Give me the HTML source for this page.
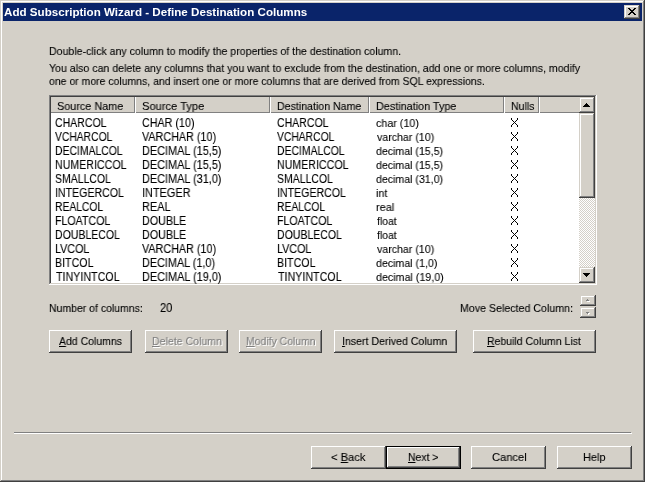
<!DOCTYPE html>
<html><head><meta charset="utf-8"><style>
html,body{margin:0;padding:0;width:645px;height:482px;overflow:hidden;background:#D4D0C8;}
.a{position:absolute;box-sizing:border-box;display:block}
.t{position:absolute;white-space:pre;font-family:'Liberation Sans', sans-serif;font-size:12px;line-height:14px;color:#000;transform-origin:0 0;will-change:transform;-webkit-text-stroke:0.1px currentColor}
u{text-decoration:underline;text-underline-offset:1px}
</style></head><body>
<div class="a" style="left:0px;top:0px;width:645px;height:482px;background:#D4D0C8;box-shadow:inset -1px -1px 0 #404040,inset 1px 1px 0 #D4D0C8,inset -2px -2px 0 #808080,inset 2px 2px 0 #FFFFFF;"></div>
<div class="a" style="left:3px;top:3px;width:639px;height:18px;background:#0A246A;"></div>
<div class="a" style="left:624px;top:5px;width:16px;height:14px;background:#D4D0C8;box-shadow:inset -1px -1px 0 #404040,inset 1px 1px 0 #D4D0C8,inset -2px -2px 0 #808080,inset 2px 2px 0 #FFFFFF;"></div>
<svg class="a" style="left:628px;top:8px" width="8" height="7" shape-rendering="crispEdges"><path fill="#000" d="M0 0h1v1h-1zM1 0h1v1h-1zM6 0h1v1h-1zM7 0h1v1h-1zM1 1h1v1h-1zM2 1h1v1h-1zM5 1h1v1h-1zM6 1h1v1h-1zM2 2h1v1h-1zM3 2h1v1h-1zM4 2h1v1h-1zM5 2h1v1h-1zM3 3h1v1h-1zM4 3h1v1h-1zM2 4h1v1h-1zM3 4h1v1h-1zM4 4h1v1h-1zM5 4h1v1h-1zM1 5h1v1h-1zM2 5h1v1h-1zM5 5h1v1h-1zM6 5h1v1h-1zM0 6h1v1h-1zM1 6h1v1h-1zM6 6h1v1h-1zM7 6h1v1h-1z"/></svg>
<div class="a" style="left:49px;top:95px;width:548px;height:190px;background:#FFFFFF;box-shadow:inset -1px -1px 0 #FFFFFF,inset 1px 1px 0 #808080,inset -2px -2px 0 #D4D0C8,inset 2px 2px 0 #404040;"></div>
<div class="a" style="left:51px;top:97px;width:528px;height:16px;background:#D4D0C8;box-shadow:inset 0 -1px 0 #808080;"></div>
<div class="a" style="left:134px;top:97px;width:1px;height:16px;background:#808080;"></div>
<div class="a" style="left:135px;top:97px;width:1px;height:16px;background:#FFFFFF;"></div>
<div class="a" style="left:269px;top:97px;width:1px;height:16px;background:#808080;"></div>
<div class="a" style="left:270px;top:97px;width:1px;height:16px;background:#FFFFFF;"></div>
<div class="a" style="left:368px;top:97px;width:1px;height:16px;background:#808080;"></div>
<div class="a" style="left:369px;top:97px;width:1px;height:16px;background:#FFFFFF;"></div>
<div class="a" style="left:503px;top:97px;width:1px;height:16px;background:#808080;"></div>
<div class="a" style="left:504px;top:97px;width:1px;height:16px;background:#FFFFFF;"></div>
<div class="a" style="left:538px;top:97px;width:1px;height:16px;background:#808080;"></div>
<div class="a" style="left:539px;top:97px;width:1px;height:16px;background:#FFFFFF;"></div>
<div class="a" style="left:579px;top:97px;width:16px;height:16px;background:#D4D0C8;box-shadow:inset -1px -1px 0 #404040,inset 1px 1px 0 #D4D0C8,inset -2px -2px 0 #808080,inset 2px 2px 0 #FFFFFF;"></div>
<div class="a" style="left:579px;top:267px;width:16px;height:16px;background:#D4D0C8;box-shadow:inset -1px -1px 0 #404040,inset 1px 1px 0 #D4D0C8,inset -2px -2px 0 #808080,inset 2px 2px 0 #FFFFFF;"></div>
<div class="a" style="left:579px;top:113px;width:16px;height:85px;background:#D4D0C8;box-shadow:inset -1px -1px 0 #404040,inset 1px 1px 0 #D4D0C8,inset -2px -2px 0 #808080,inset 2px 2px 0 #FFFFFF;"></div>
<svg class="a" style="left:579px;top:198px" width="16" height="69"><defs><pattern id="ck" width="2" height="2" patternUnits="userSpaceOnUse"><rect width="2" height="2" fill="#D4D0C8"/><rect width="1" height="1" fill="#fff"/><rect x="1" y="1" width="1" height="1" fill="#fff"/></pattern></defs><rect width="16" height="69" fill="url(#ck)"/></svg>
<svg class="a" style="left:583px;top:103px" width="7" height="4" shape-rendering="crispEdges"><path fill="#000" d="M3 0h1v1h-1zM2 1h3v1h-3zM1 2h5v1h-5zM0 3h7v1h-7z"/></svg>
<svg class="a" style="left:583px;top:273px" width="7" height="4" shape-rendering="crispEdges"><path fill="#000" d="M0 0h7v1h-7zM1 1h5v1h-5zM2 2h3v1h-3zM3 3h1v1h-1z"/></svg>
<div class="a" style="left:580px;top:295px;width:16px;height:11px;background:#D4D0C8;box-shadow:inset -1px -1px 0 #404040,inset 1px 1px 0 #D4D0C8,inset -2px -2px 0 #808080,inset 2px 2px 0 #FFFFFF;"></div>
<div class="a" style="left:580px;top:307px;width:16px;height:11px;background:#D4D0C8;box-shadow:inset -1px -1px 0 #404040,inset 1px 1px 0 #D4D0C8,inset -2px -2px 0 #808080,inset 2px 2px 0 #FFFFFF;"></div>
<svg class="a" style="left:586px;top:299px" width="4" height="3" shape-rendering="crispEdges"><path fill="#FFFFFF" d="M1 2h3v1h-3zM2 1h1v1h-1z"/><path fill="#808080" d="M1 0h1v1h-1zM0 1h3v1h-3z"/></svg>
<svg class="a" style="left:586px;top:312px" width="4" height="3" shape-rendering="crispEdges"><path fill="#FFFFFF" d="M1 1h3v1h-3zM2 2h1v1h-1z"/><path fill="#808080" d="M0 0h3v1h-3zM1 1h1v1h-1z"/></svg>
<div class="a" style="left:49px;top:330px;width:83px;height:23px;background:#D4D0C8;box-shadow:inset -1px -1px 0 #404040,inset 1px 1px 0 #FFFFFF,inset -2px -2px 0 #808080;"></div>
<div class="a" style="left:145px;top:330px;width:83px;height:23px;background:#D4D0C8;box-shadow:inset -1px -1px 0 #404040,inset 1px 1px 0 #FFFFFF,inset -2px -2px 0 #808080;"></div>
<div class="a" style="left:239px;top:330px;width:83px;height:23px;background:#D4D0C8;box-shadow:inset -1px -1px 0 #404040,inset 1px 1px 0 #FFFFFF,inset -2px -2px 0 #808080;"></div>
<div class="a" style="left:334px;top:330px;width:123px;height:23px;background:#D4D0C8;box-shadow:inset -1px -1px 0 #404040,inset 1px 1px 0 #FFFFFF,inset -2px -2px 0 #808080;"></div>
<div class="a" style="left:473px;top:330px;width:123px;height:23px;background:#D4D0C8;box-shadow:inset -1px -1px 0 #404040,inset 1px 1px 0 #FFFFFF,inset -2px -2px 0 #808080;"></div>
<div class="a" style="left:14px;top:432px;width:617px;height:1px;background:#808080;"></div>
<div class="a" style="left:14px;top:433px;width:618px;height:1px;background:#FFFFFF;"></div>
<div class="a" style="left:311px;top:446px;width:75px;height:23px;background:#D4D0C8;box-shadow:inset -1px -1px 0 #404040,inset 1px 1px 0 #FFFFFF,inset -2px -2px 0 #808080;"></div>
<div class="a" style="left:386px;top:446px;width:75px;height:23px;background:#D4D0C8;box-shadow:inset -1px -1px 0 #000,inset 1px 1px 0 #000,inset -2px -2px 0 #404040,inset 2px 2px 0 #FFFFFF,inset -3px -3px 0 #808080;"></div>
<div class="a" style="left:471px;top:446px;width:75px;height:23px;background:#D4D0C8;box-shadow:inset -1px -1px 0 #404040,inset 1px 1px 0 #FFFFFF,inset -2px -2px 0 #808080;"></div>
<div class="a" style="left:557px;top:446px;width:75px;height:23px;background:#D4D0C8;box-shadow:inset -1px -1px 0 #404040,inset 1px 1px 0 #FFFFFF,inset -2px -2px 0 #808080;"></div>
<svg class="a" style="left:511px;top:118px" width="7" height="9" shape-rendering="crispEdges"><path fill="#000" d="M0 0h1v1h-1zM6 0h1v1h-1zM0 1h1v1h-1zM6 1h1v1h-1zM1 2h1v1h-1zM5 2h1v1h-1zM2 3h1v1h-1zM4 3h1v1h-1zM3 4h1v1h-1zM2 5h1v1h-1zM4 5h1v1h-1zM1 6h1v1h-1zM5 6h1v1h-1zM0 7h1v1h-1zM6 7h1v1h-1zM0 8h1v1h-1zM6 8h1v1h-1z"/></svg>
<svg class="a" style="left:511px;top:132px" width="7" height="9" shape-rendering="crispEdges"><path fill="#000" d="M0 0h1v1h-1zM6 0h1v1h-1zM0 1h1v1h-1zM6 1h1v1h-1zM1 2h1v1h-1zM5 2h1v1h-1zM2 3h1v1h-1zM4 3h1v1h-1zM3 4h1v1h-1zM2 5h1v1h-1zM4 5h1v1h-1zM1 6h1v1h-1zM5 6h1v1h-1zM0 7h1v1h-1zM6 7h1v1h-1zM0 8h1v1h-1zM6 8h1v1h-1z"/></svg>
<svg class="a" style="left:511px;top:146px" width="7" height="9" shape-rendering="crispEdges"><path fill="#000" d="M0 0h1v1h-1zM6 0h1v1h-1zM0 1h1v1h-1zM6 1h1v1h-1zM1 2h1v1h-1zM5 2h1v1h-1zM2 3h1v1h-1zM4 3h1v1h-1zM3 4h1v1h-1zM2 5h1v1h-1zM4 5h1v1h-1zM1 6h1v1h-1zM5 6h1v1h-1zM0 7h1v1h-1zM6 7h1v1h-1zM0 8h1v1h-1zM6 8h1v1h-1z"/></svg>
<svg class="a" style="left:511px;top:160px" width="7" height="9" shape-rendering="crispEdges"><path fill="#000" d="M0 0h1v1h-1zM6 0h1v1h-1zM0 1h1v1h-1zM6 1h1v1h-1zM1 2h1v1h-1zM5 2h1v1h-1zM2 3h1v1h-1zM4 3h1v1h-1zM3 4h1v1h-1zM2 5h1v1h-1zM4 5h1v1h-1zM1 6h1v1h-1zM5 6h1v1h-1zM0 7h1v1h-1zM6 7h1v1h-1zM0 8h1v1h-1zM6 8h1v1h-1z"/></svg>
<svg class="a" style="left:511px;top:174px" width="7" height="9" shape-rendering="crispEdges"><path fill="#000" d="M0 0h1v1h-1zM6 0h1v1h-1zM0 1h1v1h-1zM6 1h1v1h-1zM1 2h1v1h-1zM5 2h1v1h-1zM2 3h1v1h-1zM4 3h1v1h-1zM3 4h1v1h-1zM2 5h1v1h-1zM4 5h1v1h-1zM1 6h1v1h-1zM5 6h1v1h-1zM0 7h1v1h-1zM6 7h1v1h-1zM0 8h1v1h-1zM6 8h1v1h-1z"/></svg>
<svg class="a" style="left:511px;top:188px" width="7" height="9" shape-rendering="crispEdges"><path fill="#000" d="M0 0h1v1h-1zM6 0h1v1h-1zM0 1h1v1h-1zM6 1h1v1h-1zM1 2h1v1h-1zM5 2h1v1h-1zM2 3h1v1h-1zM4 3h1v1h-1zM3 4h1v1h-1zM2 5h1v1h-1zM4 5h1v1h-1zM1 6h1v1h-1zM5 6h1v1h-1zM0 7h1v1h-1zM6 7h1v1h-1zM0 8h1v1h-1zM6 8h1v1h-1z"/></svg>
<svg class="a" style="left:511px;top:202px" width="7" height="9" shape-rendering="crispEdges"><path fill="#000" d="M0 0h1v1h-1zM6 0h1v1h-1zM0 1h1v1h-1zM6 1h1v1h-1zM1 2h1v1h-1zM5 2h1v1h-1zM2 3h1v1h-1zM4 3h1v1h-1zM3 4h1v1h-1zM2 5h1v1h-1zM4 5h1v1h-1zM1 6h1v1h-1zM5 6h1v1h-1zM0 7h1v1h-1zM6 7h1v1h-1zM0 8h1v1h-1zM6 8h1v1h-1z"/></svg>
<svg class="a" style="left:511px;top:216px" width="7" height="9" shape-rendering="crispEdges"><path fill="#000" d="M0 0h1v1h-1zM6 0h1v1h-1zM0 1h1v1h-1zM6 1h1v1h-1zM1 2h1v1h-1zM5 2h1v1h-1zM2 3h1v1h-1zM4 3h1v1h-1zM3 4h1v1h-1zM2 5h1v1h-1zM4 5h1v1h-1zM1 6h1v1h-1zM5 6h1v1h-1zM0 7h1v1h-1zM6 7h1v1h-1zM0 8h1v1h-1zM6 8h1v1h-1z"/></svg>
<svg class="a" style="left:511px;top:230px" width="7" height="9" shape-rendering="crispEdges"><path fill="#000" d="M0 0h1v1h-1zM6 0h1v1h-1zM0 1h1v1h-1zM6 1h1v1h-1zM1 2h1v1h-1zM5 2h1v1h-1zM2 3h1v1h-1zM4 3h1v1h-1zM3 4h1v1h-1zM2 5h1v1h-1zM4 5h1v1h-1zM1 6h1v1h-1zM5 6h1v1h-1zM0 7h1v1h-1zM6 7h1v1h-1zM0 8h1v1h-1zM6 8h1v1h-1z"/></svg>
<svg class="a" style="left:511px;top:244px" width="7" height="9" shape-rendering="crispEdges"><path fill="#000" d="M0 0h1v1h-1zM6 0h1v1h-1zM0 1h1v1h-1zM6 1h1v1h-1zM1 2h1v1h-1zM5 2h1v1h-1zM2 3h1v1h-1zM4 3h1v1h-1zM3 4h1v1h-1zM2 5h1v1h-1zM4 5h1v1h-1zM1 6h1v1h-1zM5 6h1v1h-1zM0 7h1v1h-1zM6 7h1v1h-1zM0 8h1v1h-1zM6 8h1v1h-1z"/></svg>
<svg class="a" style="left:511px;top:258px" width="7" height="9" shape-rendering="crispEdges"><path fill="#000" d="M0 0h1v1h-1zM6 0h1v1h-1zM0 1h1v1h-1zM6 1h1v1h-1zM1 2h1v1h-1zM5 2h1v1h-1zM2 3h1v1h-1zM4 3h1v1h-1zM3 4h1v1h-1zM2 5h1v1h-1zM4 5h1v1h-1zM1 6h1v1h-1zM5 6h1v1h-1zM0 7h1v1h-1zM6 7h1v1h-1zM0 8h1v1h-1zM6 8h1v1h-1z"/></svg>
<svg class="a" style="left:511px;top:272px" width="7" height="9" shape-rendering="crispEdges"><path fill="#000" d="M0 0h1v1h-1zM6 0h1v1h-1zM0 1h1v1h-1zM6 1h1v1h-1zM1 2h1v1h-1zM5 2h1v1h-1zM2 3h1v1h-1zM4 3h1v1h-1zM3 4h1v1h-1zM2 5h1v1h-1zM4 5h1v1h-1zM1 6h1v1h-1zM5 6h1v1h-1zM0 7h1v1h-1zM6 7h1v1h-1zM0 8h1v1h-1zM6 8h1v1h-1z"/></svg>
<div class="t" style="left:3.94px;top:5px;transform:scaleX(1.0559);font-size:11.5px;font-weight:bold;color:#fff;font-size:11px;-webkit-text-stroke-width:0;">Add Subscription Wizard - Define Destination Columns</div>
<div class="t" style="left:49.08px;top:44px;transform:scaleX(0.9211);font-size:11.5px;">Double-click any column to modify the properties of the destination column.</div>
<div class="t" style="left:49.08px;top:61px;transform:scaleX(0.9217);font-size:11.5px;">You also can delete any columns that you want to exclude from the destination, add one or more columns, modify</div>
<div class="t" style="left:49.09px;top:74px;transform:scaleX(0.9099);font-size:11.5px;">one or more columns, and insert one or more columns that are derived from SQL expressions.</div>
<div class="t" style="left:57.06px;top:99px;transform:scaleX(0.942);font-size:11.5px;">Source Name</div>
<div class="t" style="left:142.03px;top:99px;transform:scaleX(0.9683);font-size:11.5px;">Source Type</div>
<div class="t" style="left:277.08px;top:99px;transform:scaleX(0.9222);font-size:11.5px;">Destination Name</div>
<div class="t" style="left:376.06px;top:99px;transform:scaleX(0.9405);font-size:11.5px;">Destination Type</div>
<div class="t" style="left:511.08px;top:99px;transform:scaleX(0.9167);font-size:11.5px;">Nulls</div>
<div class="t" style="left:55.12px;top:116px;transform:scaleX(0.8772);">CHARCOL</div>
<div class="t" style="left:142.11px;top:116px;transform:scaleX(0.8947);">CHAR (10)</div>
<div class="t" style="left:277.12px;top:116px;transform:scaleX(0.8772);">CHARCOL</div>
<div class="t" style="left:376.07px;top:116px;transform:scaleX(0.9318);font-size:11.5px;">char (10)</div>
<div class="t" style="left:55.0px;top:130px;transform:scaleX(0.8591);">VCHARCOL</div>
<div class="t" style="left:142.0px;top:130px;transform:scaleX(0.8988);">VARCHAR (10)</div>
<div class="t" style="left:277.0px;top:130px;transform:scaleX(0.8591);">VCHARCOL</div>
<div class="t" style="left:377.0px;top:130px;transform:scaleX(0.923);font-size:11.5px;">varchar (10)</div>
<div class="t" style="left:55.13px;top:144px;transform:scaleX(0.8662);">DECIMALCOL</div>
<div class="t" style="left:142.09px;top:144px;transform:scaleX(0.907);">DECIMAL (15,5)</div>
<div class="t" style="left:277.13px;top:144px;transform:scaleX(0.8662);">DECIMALCOL</div>
<div class="t" style="left:376.08px;top:144px;transform:scaleX(0.9197);font-size:11.5px;">decimal (15,5)</div>
<div class="t" style="left:55.11px;top:158px;transform:scaleX(0.8861);">NUMERICCOL</div>
<div class="t" style="left:142.09px;top:158px;transform:scaleX(0.907);">DECIMAL (15,5)</div>
<div class="t" style="left:277.11px;top:158px;transform:scaleX(0.8861);">NUMERICCOL</div>
<div class="t" style="left:376.08px;top:158px;transform:scaleX(0.9197);font-size:11.5px;">decimal (15,5)</div>
<div class="t" style="left:55.13px;top:172px;transform:scaleX(0.873);">SMALLCOL</div>
<div class="t" style="left:142.09px;top:172px;transform:scaleX(0.907);">DECIMAL (31,0)</div>
<div class="t" style="left:277.13px;top:172px;transform:scaleX(0.873);">SMALLCOL</div>
<div class="t" style="left:376.08px;top:172px;transform:scaleX(0.9197);font-size:11.5px;">decimal (31,0)</div>
<div class="t" style="left:55.12px;top:186px;transform:scaleX(0.8831);">INTEGERCOL</div>
<div class="t" style="left:142.09px;top:186px;transform:scaleX(0.9096);">INTEGER</div>
<div class="t" style="left:277.12px;top:186px;transform:scaleX(0.8831);">INTEGERCOL</div>
<div class="t" style="left:376.06px;top:186px;transform:scaleX(0.9364);font-size:11.5px;">int</div>
<div class="t" style="left:55.14px;top:200px;transform:scaleX(0.86);">REALCOL</div>
<div class="t" style="left:142.09px;top:200px;transform:scaleX(0.91);">REAL</div>
<div class="t" style="left:277.14px;top:200px;transform:scaleX(0.86);">REALCOL</div>
<div class="t" style="left:376.04px;top:200px;transform:scaleX(0.9588);font-size:11.5px;">real</div>
<div class="t" style="left:55.11px;top:214px;transform:scaleX(0.8852);">FLOATCOL</div>
<div class="t" style="left:142.1px;top:214px;transform:scaleX(0.8958);">DOUBLE</div>
<div class="t" style="left:277.11px;top:214px;transform:scaleX(0.8852);">FLOATCOL</div>
<div class="t" style="left:377.0px;top:214px;transform:scaleX(0.9048);font-size:11.5px;">float</div>
<div class="t" style="left:55.12px;top:228px;transform:scaleX(0.8767);">DOUBLECOL</div>
<div class="t" style="left:142.1px;top:228px;transform:scaleX(0.8958);">DOUBLE</div>
<div class="t" style="left:277.12px;top:228px;transform:scaleX(0.8767);">DOUBLECOL</div>
<div class="t" style="left:377.0px;top:228px;transform:scaleX(0.9048);font-size:11.5px;">float</div>
<div class="t" style="left:55.11px;top:242px;transform:scaleX(0.8919);">LVCOL</div>
<div class="t" style="left:142.0px;top:242px;transform:scaleX(0.8988);">VARCHAR (10)</div>
<div class="t" style="left:277.11px;top:242px;transform:scaleX(0.8919);">LVCOL</div>
<div class="t" style="left:377.0px;top:242px;transform:scaleX(0.923);font-size:11.5px;">varchar (10)</div>
<div class="t" style="left:55.11px;top:256px;transform:scaleX(0.8881);">BITCOL</div>
<div class="t" style="left:142.1px;top:256px;transform:scaleX(0.9025);">DECIMAL (1,0)</div>
<div class="t" style="left:277.11px;top:256px;transform:scaleX(0.8881);">BITCOL</div>
<div class="t" style="left:376.08px;top:256px;transform:scaleX(0.9231);font-size:11.5px;">decimal (1,0)</div>
<div class="t" style="left:56.0px;top:270px;transform:scaleX(0.8915);">TINYINTCOL</div>
<div class="t" style="left:142.09px;top:270px;transform:scaleX(0.907);">DECIMAL (19,0)</div>
<div class="t" style="left:278.0px;top:270px;transform:scaleX(0.8915);">TINYINTCOL</div>
<div class="t" style="left:376.07px;top:270px;transform:scaleX(0.9296);font-size:11.5px;">decimal (19,0)</div>
<div class="t" style="left:49.09px;top:301px;transform:scaleX(0.9109);font-size:11.5px;">Number of columns:</div>
<div class="t" style="left:160.08px;top:301px;transform:scaleX(0.9167);">20</div>
<div class="t" style="left:460.08px;top:301px;transform:scaleX(0.925);font-size:11.5px;">Move Selected Column:</div>
<div class="t" style="left:59.0px;top:334px;transform:scaleX(0.9118);font-size:11.5px;"><u>A</u>dd Columns</div>
<div class="t" style="left:152.08px;top:334px;transform:scaleX(0.9189);font-size:11.5px;color:#FFFFFF;margin:1px 0 0 1px"><u>D</u>elete Column</div>
<div class="t" style="left:152.08px;top:334px;transform:scaleX(0.9189);font-size:11.5px;color:#808080"><u>D</u>elete Column</div>
<div class="t" style="left:246.09px;top:334px;transform:scaleX(0.9067);font-size:11.5px;color:#FFFFFF;margin:1px 0 0 1px"><u>M</u>odify Column</div>
<div class="t" style="left:246.09px;top:334px;transform:scaleX(0.9067);font-size:11.5px;color:#808080"><u>M</u>odify Column</div>
<div class="t" style="left:342.08px;top:334px;transform:scaleX(0.9204);font-size:11.5px;"><u>I</u>nsert Derived Column</div>
<div class="t" style="left:487.09px;top:334px;transform:scaleX(0.9118);font-size:11.5px;"><u>R</u>ebuild Column List</div>
<div class="t" style="left:331.03px;top:450px;transform:scaleX(0.9706);font-size:11.5px;">&lt; <u>B</u>ack</div>
<div class="t" style="left:408.09px;top:450px;transform:scaleX(0.9062);font-size:11.5px;"><u>N</u>ext &gt;</div>
<div class="t" style="left:492.03px;top:450px;transform:scaleX(0.9706);font-size:11.5px;">Cancel</div>
<div class="t" style="left:583.05px;top:450px;transform:scaleX(0.9545);font-size:11.5px;">Help</div>
</body></html>
